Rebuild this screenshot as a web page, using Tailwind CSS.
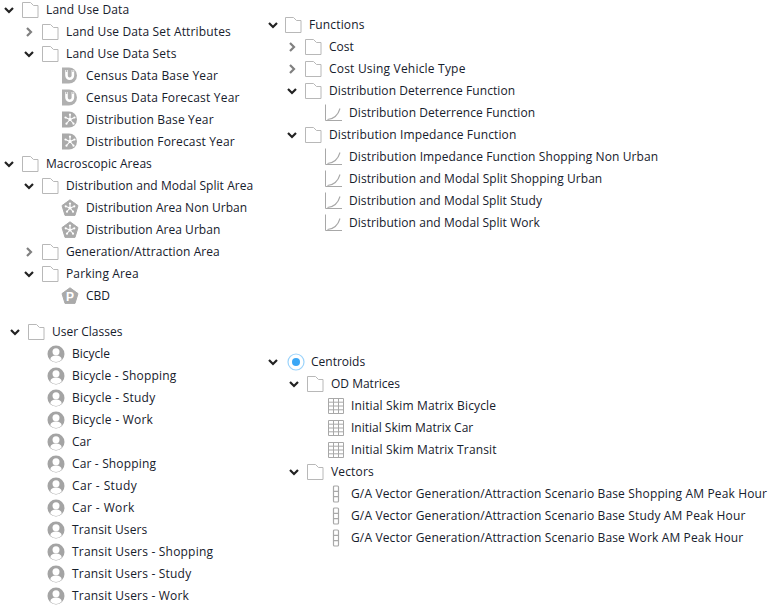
<!DOCTYPE html>
<html lang="en">
<head>
  <meta charset="UTF-8" />
  <title>Project tree</title>
  <script src="https://cdn.jsdelivr.net/npm/@tailwindcss/browser@4"></script>
</head>
<body class="bg-white overflow-hidden w-[772px] h-[609px] font-['Open_Sans','Noto_Sans',sans-serif] text-[12px] tracking-[0.15px] text-[#16202c]">
  <!-- shared icons -->
  <svg class="hidden">
    <symbol id="down" viewBox="0 0 12 12"><path d="M2 4l4 4 4-4" fill="none" stroke="#222" stroke-width="2.200"/></symbol>
    <symbol id="right" viewBox="0 0 12 12"><path d="M4 2l4 4-4 4" fill="none" stroke="#808080" stroke-width="2.200"/></symbol>
    <symbol id="folder" viewBox="0 0 18 18"><path d="M1.500 16.500v-15h8l3 3h4.500v12z" fill="#fff" stroke="#b8b8b8"/></symbol>
    <symbol id="magnet" viewBox="0 0 18 18"><path d="M1 .5h7a8 8 0 0 1 0 16H1z" fill="#b0b0b0"/><path d="M5.500 3v5.500a3.200 3.200 0 0 0 6.400 0V3" fill="none" stroke="#fff" stroke-width="2.600"/><circle cx="5.500" cy="4" r=".8" fill="#9a9a9a"/><circle cx="11.900" cy="4" r=".8" fill="#9a9a9a"/></symbol>
    <symbol id="dist" viewBox="0 0 18 18"><path d="M1 .5h7a8 8 0 0 1 0 16H1z" fill="#aaa"/><path d="M9 8.500V4M9 8.500l4.500-2M9 8.500l3.500 4M9 8.500l-3.500 4M9 8.500l-4.500-2" stroke="#fff" stroke-width="1.100"/><circle cx="9" cy="8.500" r="1.500" fill="#fff"/><circle cx="9" cy="3.700" r="1.100" fill="#fff"/><circle cx="13.500" cy="6.500" r="1.100" fill="#fff"/><circle cx="12.500" cy="12.700" r="1.100" fill="#fff"/><circle cx="5.500" cy="12.700" r="1.100" fill="#fff"/><circle cx="4.500" cy="6.500" r="1.100" fill="#fff"/></symbol>
    <symbol id="penta" viewBox="0 0 18 18"><path d="M9 .8l8 5.800-3 9.800H4L1 6.600z" fill="#aaa" stroke="#aaa" stroke-linejoin="round"/><path d="M9 9V5M9 9l4-1.500M9 9l3 3.500M9 9l-3 3.500M9 9L5 7.500" stroke="#fff" stroke-width="1.100"/><circle cx="9" cy="9" r="1.500" fill="#fff"/><circle cx="9" cy="4.500" r="1.100" fill="#fff"/><circle cx="13.300" cy="7.300" r="1.100" fill="#fff"/><circle cx="12" cy="12.700" r="1.100" fill="#fff"/><circle cx="6" cy="12.700" r="1.100" fill="#fff"/><circle cx="4.700" cy="7.300" r="1.100" fill="#fff"/></symbol>
    <symbol id="parking" viewBox="0 0 18 18"><path d="M9 .8l8 5.800-3 9.800H4L1 6.600z" fill="#aaa" stroke="#aaa" stroke-linejoin="round"/><text x="9" y="13.500" text-anchor="middle" font-size="12" font-weight="700" fill="#fff" font-family="Liberation Sans">P</text></symbol>
    <symbol id="user" viewBox="0 0 18 18"><circle cx="9" cy="9" r="8.500" fill="#a4a4a4"/><circle cx="9" cy="6.800" r="3.500" fill="#fff"/><path d="M3.500 14.800c-.5-3 2.500-4.300 5.500-4.300s6 1.300 5.500 4.300a8 8 0 0 1-11 0z" fill="#fff"/></symbol>
    <symbol id="func" viewBox="0 0 18 18"><path d="M1.500 .5v16H18" fill="none" stroke="#a8a8a8"/><path d="M3.500 15.500C9 15 14 11.500 16 4.500" fill="none" stroke="#a8a8a8" stroke-width="1.100"/></symbol>
    <symbol id="grid" viewBox="0 0 18 18"><path d="M2.500 1.500h15v15h-15zM2.500 5.200h15M2.500 9h15M2.500 12.800h15M7.500 1.500v15M12.500 1.500v15" fill="none" stroke="#a8a8a8"/></symbol>
    <symbol id="vector" viewBox="0 0 18 18"><rect x="7.500" y="1" width="5" height="16" rx="1" fill="none" stroke="#a8a8a8" stroke-width="1.200"/><path d="M7.500 6.300h5M7.500 11.700h5" stroke="#a8a8a8" stroke-width="1.200"/></symbol>
    <symbol id="radio" viewBox="0 0 18 18"><circle cx="9" cy="9" r="8" fill="#fff" stroke="#9bd3fb" stroke-width="1.200"/><circle cx="9" cy="9" r="4" fill="#3aa7f6"/></symbol>
  </svg>

  <div class="flex -mt-[1px]">
    <!-- left column -->
    <div class="w-[267px] shrink-0">
      <ul>
        <li class="flex items-center h-[22px] pl-[3px]"><svg class="w-[12px] h-[12px]"><use href="#down"/></svg><svg class="w-[18px] h-[18px] ml-[6px]"><use href="#folder"/></svg><span class="ml-[7px]">Land Use Data</span></li>
        <li class="flex items-center h-[22px] pl-[23px]"><svg class="w-[12px] h-[12px]"><use href="#right"/></svg><svg class="w-[18px] h-[18px] ml-[6px]"><use href="#folder"/></svg><span class="ml-[7px]">Land Use Data Set Attributes</span></li>
        <li class="flex items-center h-[22px] pl-[23px]"><svg class="w-[12px] h-[12px]"><use href="#down"/></svg><svg class="w-[18px] h-[18px] ml-[6px]"><use href="#folder"/></svg><span class="ml-[7px]">Land Use Data Sets</span></li>
        <li class="flex items-center h-[22px] pl-[61px]"><svg class="w-[18px] h-[18px]"><use href="#magnet"/></svg><span class="ml-[7px] tracking-[0.2px]">Census Data Base Year</span></li>
        <li class="flex items-center h-[22px] pl-[61px]"><svg class="w-[18px] h-[18px]"><use href="#magnet"/></svg><span class="ml-[7px] tracking-[0.2px]">Census Data Forecast Year</span></li>
        <li class="flex items-center h-[22px] pl-[61px]"><svg class="w-[18px] h-[18px]"><use href="#dist"/></svg><span class="ml-[7px]">Distribution Base Year</span></li>
        <li class="flex items-center h-[22px] pl-[61px]"><svg class="w-[18px] h-[18px]"><use href="#dist"/></svg><span class="ml-[7px]">Distribution Forecast Year</span></li>
        <li class="flex items-center h-[22px] pl-[3px]"><svg class="w-[12px] h-[12px]"><use href="#down"/></svg><svg class="w-[18px] h-[18px] ml-[6px]"><use href="#folder"/></svg><span class="ml-[7px] tracking-[0.06px]">Macroscopic Areas</span></li>
        <li class="flex items-center h-[22px] pl-[23px]"><svg class="w-[12px] h-[12px]"><use href="#down"/></svg><svg class="w-[18px] h-[18px] ml-[6px]"><use href="#folder"/></svg><span class="ml-[7px] tracking-[0.06px]">Distribution and Modal Split Area</span></li>
        <li class="flex items-center h-[22px] pl-[61px]"><svg class="w-[18px] h-[18px]"><use href="#penta"/></svg><span class="ml-[7px] tracking-[0.04px]">Distribution Area Non Urban</span></li>
        <li class="flex items-center h-[22px] pl-[61px]"><svg class="w-[18px] h-[18px]"><use href="#penta"/></svg><span class="ml-[7px] tracking-[0.04px]">Distribution Area Urban</span></li>
        <li class="flex items-center h-[22px] pl-[23px]"><svg class="w-[12px] h-[12px]"><use href="#right"/></svg><svg class="w-[18px] h-[18px] ml-[6px]"><use href="#folder"/></svg><span class="ml-[7px] tracking-[0.08px]">Generation/Attraction Area</span></li>
        <li class="flex items-center h-[22px] pl-[23px]"><svg class="w-[12px] h-[12px]"><use href="#down"/></svg><svg class="w-[18px] h-[18px] ml-[6px]"><use href="#folder"/></svg><span class="ml-[7px]">Parking Area</span></li>
        <li class="flex items-center h-[22px] pl-[61px]"><svg class="w-[18px] h-[18px]"><use href="#parking"/></svg><span class="ml-[7px] tracking-normal">CBD</span></li>
      </ul>
      <ul class="mt-[14px]">
        <li class="flex items-center h-[22px] pl-[9px]"><svg class="w-[12px] h-[12px]"><use href="#down"/></svg><svg class="w-[18px] h-[18px] ml-[6px]"><use href="#folder"/></svg><span class="ml-[7px] tracking-normal">User Classes</span></li>
        <li class="flex items-center h-[22px] pl-[47px]"><svg class="w-[18px] h-[18px]"><use href="#user"/></svg><span class="ml-[7px] tracking-normal">Bicycle</span></li>
        <li class="flex items-center h-[22px] pl-[47px]"><svg class="w-[18px] h-[18px]"><use href="#user"/></svg><span class="ml-[7px] tracking-[0.2px]">Bicycle - Shopping</span></li>
        <li class="flex items-center h-[22px] pl-[47px]"><svg class="w-[18px] h-[18px]"><use href="#user"/></svg><span class="ml-[7px] tracking-[0.25px]">Bicycle - Study</span></li>
        <li class="flex items-center h-[22px] pl-[47px]"><svg class="w-[18px] h-[18px]"><use href="#user"/></svg><span class="ml-[7px] tracking-[0.25px]">Bicycle - Work</span></li>
        <li class="flex items-center h-[22px] pl-[47px]"><svg class="w-[18px] h-[18px]"><use href="#user"/></svg><span class="ml-[7px] tracking-normal">Car</span></li>
        <li class="flex items-center h-[22px] pl-[47px]"><svg class="w-[18px] h-[18px]"><use href="#user"/></svg><span class="ml-[7px]">Car - Shopping</span></li>
        <li class="flex items-center h-[22px] pl-[47px]"><svg class="w-[18px] h-[18px]"><use href="#user"/></svg><span class="ml-[7px] tracking-[0.4px]">Car - Study</span></li>
        <li class="flex items-center h-[22px] pl-[47px]"><svg class="w-[18px] h-[18px]"><use href="#user"/></svg><span class="ml-[7px] tracking-[0.4px]">Car - Work</span></li>
        <li class="flex items-center h-[22px] pl-[47px]"><svg class="w-[18px] h-[18px]"><use href="#user"/></svg><span class="ml-[7px]">Transit Users</span></li>
        <li class="flex items-center h-[22px] pl-[47px]"><svg class="w-[18px] h-[18px]"><use href="#user"/></svg><span class="ml-[7px] tracking-[0.2px]">Transit Users - Shopping</span></li>
        <li class="flex items-center h-[22px] pl-[47px]"><svg class="w-[18px] h-[18px]"><use href="#user"/></svg><span class="ml-[7px] tracking-[0.2px]">Transit Users - Study</span></li>
        <li class="flex items-center h-[22px] pl-[47px]"><svg class="w-[18px] h-[18px]"><use href="#user"/></svg><span class="ml-[7px] tracking-[0.2px]">Transit Users - Work</span></li>
      </ul>
    </div>
    <!-- right column -->
    <div class="pt-[15px]">
      <ul>
        <li class="flex items-center h-[22px]"><svg class="w-[12px] h-[12px]"><use href="#down"/></svg><svg class="w-[18px] h-[18px] ml-[5px]"><use href="#folder"/></svg><span class="ml-[7px]">Functions</span></li>
        <li class="flex items-center h-[22px] pl-[19px]"><svg class="w-[12px] h-[12px]"><use href="#right"/></svg><svg class="w-[18px] h-[18px] ml-[6px]"><use href="#folder"/></svg><span class="ml-[7px] tracking-normal">Cost</span></li>
        <li class="flex items-center h-[22px] pl-[19px]"><svg class="w-[12px] h-[12px]"><use href="#right"/></svg><svg class="w-[18px] h-[18px] ml-[6px]"><use href="#folder"/></svg><span class="ml-[7px] tracking-[0.2px]">Cost Using Vehicle Type</span></li>
        <li class="flex items-center h-[22px] pl-[19px]"><svg class="w-[12px] h-[12px]"><use href="#down"/></svg><svg class="w-[18px] h-[18px] ml-[6px]"><use href="#folder"/></svg><span class="ml-[7px] tracking-[0.07px]">Distribution Deterrence Function</span></li>
        <li class="flex items-center h-[22px] pl-[57px]"><svg class="w-[18px] h-[18px]"><use href="#func"/></svg><span class="ml-[7px] tracking-[0.07px]">Distribution Deterrence Function</span></li>
        <li class="flex items-center h-[22px] pl-[19px]"><svg class="w-[12px] h-[12px]"><use href="#down"/></svg><svg class="w-[18px] h-[18px] ml-[6px]"><use href="#folder"/></svg><span class="ml-[7px] tracking-[0.13px]">Distribution Impedance Function</span></li>
        <li class="flex items-center h-[22px] pl-[57px]"><svg class="w-[18px] h-[18px]"><use href="#func"/></svg><span class="ml-[7px] tracking-[0.1px]">Distribution Impedance Function Shopping Non Urban</span></li>
        <li class="flex items-center h-[22px] pl-[57px]"><svg class="w-[18px] h-[18px]"><use href="#func"/></svg><span class="ml-[7px] tracking-[0.07px]">Distribution and Modal Split Shopping Urban</span></li>
        <li class="flex items-center h-[22px] pl-[57px]"><svg class="w-[18px] h-[18px]"><use href="#func"/></svg><span class="ml-[7px] tracking-[0.06px]">Distribution and Modal Split Study</span></li>
        <li class="flex items-center h-[22px] pl-[57px]"><svg class="w-[18px] h-[18px]"><use href="#func"/></svg><span class="ml-[7px] tracking-[0.06px]">Distribution and Modal Split Work</span></li>
      </ul>
      <ul class="mt-[117px]">
        <li class="flex items-center h-[22px]"><svg class="w-[12px] h-[12px]"><use href="#down"/></svg><svg class="w-[18px] h-[18px] ml-[8px]"><use href="#radio"/></svg><span class="ml-[6px] tracking-normal">Centroids</span></li>
        <li class="flex items-center h-[22px] pl-[21px]"><svg class="w-[12px] h-[12px]"><use href="#down"/></svg><svg class="w-[18px] h-[18px] ml-[6px]"><use href="#folder"/></svg><span class="ml-[7px] tracking-normal">OD Matrices</span></li>
        <li class="flex items-center h-[22px] pl-[59px]"><svg class="w-[18px] h-[18px]"><use href="#grid"/></svg><span class="ml-[7px]">Initial Skim Matrix Bicycle</span></li>
        <li class="flex items-center h-[22px] pl-[59px]"><svg class="w-[18px] h-[18px]"><use href="#grid"/></svg><span class="ml-[7px] tracking-normal">Initial Skim Matrix Car</span></li>
        <li class="flex items-center h-[22px] pl-[59px]"><svg class="w-[18px] h-[18px]"><use href="#grid"/></svg><span class="ml-[7px]">Initial Skim Matrix Transit</span></li>
        <li class="flex items-center h-[22px] pl-[21px]"><svg class="w-[12px] h-[12px]"><use href="#down"/></svg><svg class="w-[18px] h-[18px] ml-[6px]"><use href="#folder"/></svg><span class="ml-[7px]">Vectors</span></li>
        <li class="flex items-center h-[22px] pl-[59px]"><svg class="w-[18px] h-[18px]"><use href="#vector"/></svg><span class="ml-[7px]">G/A Vector Generation/Attraction Scenario Base Shopping AM Peak Hour</span></li>
        <li class="flex items-center h-[22px] pl-[59px]"><svg class="w-[18px] h-[18px]"><use href="#vector"/></svg><span class="ml-[7px]">G/A Vector Generation/Attraction Scenario Base Study AM Peak Hour</span></li>
        <li class="flex items-center h-[22px] pl-[59px]"><svg class="w-[18px] h-[18px]"><use href="#vector"/></svg><span class="ml-[7px]">G/A Vector Generation/Attraction Scenario Base Work AM Peak Hour</span></li>
      </ul>
    </div>
  </div>
</body>
</html>
